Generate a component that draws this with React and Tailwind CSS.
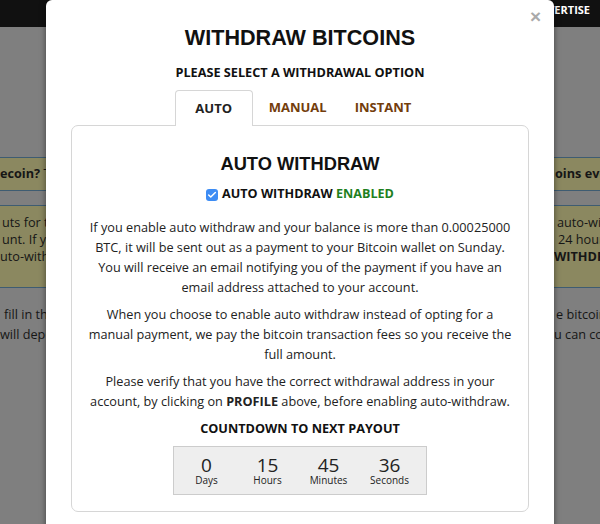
import { Check } from 'lucide-react';

// dimmed page behind the modal: only the outer strips show
function Strip({ left, right, className = '' }) {
  return (
    <div className={`flex ${className}`}>
      <div className="w-[46px] overflow-hidden whitespace-nowrap">{left}</div>
      <div className="ml-auto w-[46px] overflow-hidden whitespace-nowrap">{right}</div>
    </div>
  );
}

const UNITS = [
  { value: '0', label: 'Days' },
  { value: '15', label: 'Hours' },
  { value: '45', label: 'Minutes' },
  { value: '36', label: 'Seconds' },
];

export default function App() {
  return (
    <div className="relative w-[600px] h-[524px] overflow-hidden bg-[#7f7f7f] font-['Open_Sans',sans-serif] text-[12.7px] text-[#161616]">
      {/* Page behind the overlay */}
      <header className="h-[27px] bg-[#111] flex justify-end pr-[10px] pt-[3px]">
        <span className="text-white text-[11px] font-bold leading-[14px]">ADVERTISE</span>
      </header>

      <Strip
        className="mt-[130px] h-[34px] items-center bg-[#8b8860] border-y border-[#3e5c72]"
        left={<span><b>ecoin?</b> Try</span>}
        right={<b className="pl-[1px]">oins every</b>}
      />

      <div className="mt-[14px] h-[83px] bg-[#8b8860] border-y border-[#3e5c72] pt-[8px] leading-[17px]">
        <Strip left={<span className="pl-[2px]">uts for the</span>} right={<span className="pl-[3px]">auto-with</span>} />
        <Strip left={<span className="pl-[2px]">unt. If you</span>} right={<span className="pl-[4px]">24 hours</span>} />
        <Strip left={<span>uto-withdraw</span>} right={<b>WITHDRAW</b>} />
      </div>

      <div className="mt-[16px] leading-[20px]">
        <Strip left={<span className="pl-[4px]">fill in the</span>} right={<span className="pl-[2px]">e bitcoin</span>} />
        <Strip left={<span>will depo</span>} right={<span>u can co</span>} />
      </div>

      {/* Modal */}
      <div className="absolute left-[46px] top-0 w-[508px] h-[560px] bg-white rounded-t-[6px] shadow-[0_0_6px_rgba(0,0,0,0.5)]">
        <button className="absolute right-[13px] top-[5px] text-[19px] leading-[24px] font-bold text-[#aaa] font-['Liberation_Sans',sans-serif]">
          ×
        </button>

        <h1 className="pt-[25px] text-center font-['Liberation_Sans',sans-serif] font-bold text-[21.6px] leading-[26px] text-[#111]">
          WITHDRAW BITCOINS
        </h1>
        <h2 className="mt-[11px] text-center font-bold text-[12.7px] leading-[20px] text-[#111]">
          PLEASE SELECT A WITHDRAWAL OPTION
        </h2>

        {/* Tabs */}
        <div className="mt-[8px] flex justify-center font-bold text-[13px] leading-[20px]">
          <div className="relative z-10 -mb-px w-[78px] text-center pt-[7px] pb-[8px] bg-white border border-b-0 border-[#d6d6d6] rounded-t-[4px] text-[#222]">
            AUTO
          </div>
          <div className="ml-[2px] px-[14px] pt-[7px] text-[#733d0c]">MANUAL</div>
          <div className="px-[14px] pt-[7px] text-[#733d0c]">INSTANT</div>
        </div>

        {/* Panel */}
        <div className="mx-[25px] border border-[#d6d6d6] rounded-[7px] pt-[27px] px-[16px] pb-[16px] text-center text-[#222]">
          <h3 className="font-['Liberation_Sans',sans-serif] font-bold text-[18.3px] leading-[22px] text-[#111]">
            AUTO WITHDRAW
          </h3>

          <div className="mt-[9px] flex items-center justify-center gap-[4px] font-bold text-[12.6px] leading-[20px]">
            <span className="w-[12px] h-[12px] rounded-[3px] bg-[#3d8cf4] flex items-center justify-center mt-[1px]">
              <Check size={10} strokeWidth={3.5} className="text-white" />
            </span>
            <span className="text-[#111]">
              AUTO WITHDRAW <span className="text-[#1e7f1e]">ENABLED</span>
            </span>
          </div>

          <p className="mt-[13px] leading-[20px]">
            If you enable auto withdraw and your balance is more than 0.00025000 BTC, it will be sent out
            as a payment to your Bitcoin wallet on Sunday. You will receive an email notifying you of the
            payment if you have an email address attached to your account.
          </p>
          <p className="mt-[7px] leading-[20px]">
            When you choose to enable auto withdraw instead of opting for a manual payment, we pay the
            bitcoin transaction fees so you receive the full amount.
          </p>
          <p className="mt-[7px] leading-[20px]">
            Please verify that you have the correct withdrawal address in your account, by clicking on{' '}
            <b>PROFILE</b> above, before enabling auto-withdraw.
          </p>

          <h4 className="mt-[7px] font-bold text-[12.7px] leading-[20px] text-[#111]">COUNTDOWN TO NEXT PAYOUT</h4>

          <div className="mt-[8px] mx-auto w-[254px] bg-[#eeeeee] border border-[#cccccc] grid grid-cols-4 pl-[2px] pr-[6px] pt-[9px] pb-[8px] text-[#222]">
            {UNITS.map((u) => (
              <div key={u.label} className="flex flex-col items-center">
                <span className="text-[19px] leading-[18px]">{u.value}</span>
                <span className="text-[10px] leading-[12px]">{u.label}</span>
              </div>
            ))}
          </div>
        </div>
      </div>
    </div>
  );
}
